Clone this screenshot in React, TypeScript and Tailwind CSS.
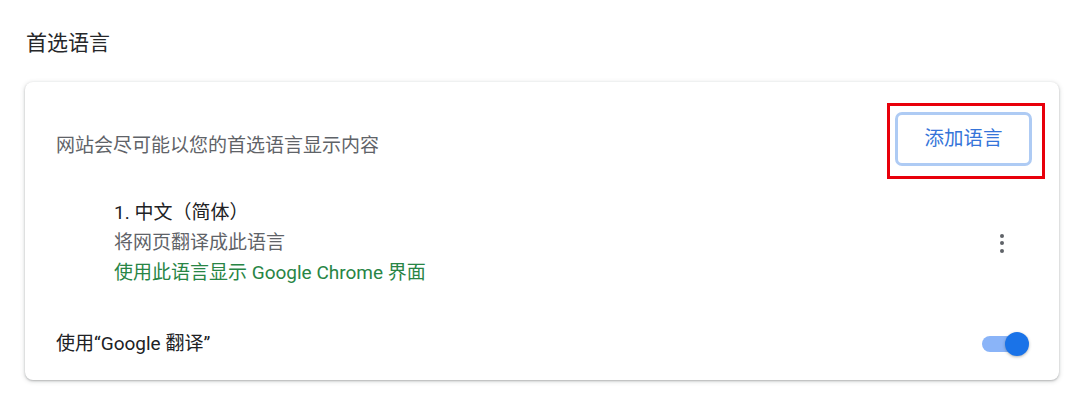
import React from "react";

const font = { fontFamily: "Roboto, 'Noto Sans CJK SC', 'Noto Sans', sans-serif" };

export default function App() {
  return (
    <div className="w-[1080px] h-[402px] bg-white overflow-hidden" style={font}>
      <div className="pt-[29px] pl-[26px] h-[82px]">
        <div className="text-[21px] leading-[28px] text-[#262729]">首选语言</div>
      </div>
      <div className="mx-[25px] w-[1034px] h-[298px] rounded-[8px] bg-white shadow-[0_1px_2px_rgba(60,64,67,0.3),0_1px_4px_1px_rgba(60,64,67,0.15)] flex flex-col">
        <div className="flex items-start justify-between pt-[21px] pl-[31px] pr-[14px]">
          <div className="mt-[30px] text-[19px] leading-[26px] text-[#5f6368]">网站会尽可能以您的首选语言显示内容</div>
          <div className="border-[3px] border-[#e8000b] pl-[5px] pr-[10px] pt-[6px] pb-[10px]">
            <button className="w-[137px] h-[54px] rounded-[7px] border-[3px] border-[#aecbf4] bg-white text-[19.5px] text-[#3574d9] flex items-center justify-center">
              添加语言
            </button>
          </div>
        </div>
        <div className="mt-[19px] flex items-center pl-[89px] pr-[50px]">
          <div className="flex-1 text-[19px] leading-[30px]">
            <div className="text-[#202124]">1. 中文（简体）</div>
            <div className="text-[#5f6368]">将网页翻译成此语言</div>
            <div className="text-[#288545]">使用此语言显示 Google Chrome 界面</div>
          </div>
          <div className="flex flex-col items-center gap-[3.5px] w-[14px]">
            <span className="w-[4px] h-[4px] rounded-full bg-[#5f6368]" />
            <span className="w-[4px] h-[4px] rounded-full bg-[#5f6368]" />
            <span className="w-[4px] h-[4px] rounded-full bg-[#5f6368]" />
          </div>
        </div>
        <div className="mt-[32px] h-[48px] flex items-center justify-between pl-[31px] pr-[30px]">
          <div className="text-[19px] leading-[26px] text-[#202124]">使用“Google 翻译”</div>
          <div className="relative w-[47px] h-[26px] flex items-center">
            <div className="w-[44px] h-[16px] rounded-full bg-[#8ab4f8]" />
            <div className="absolute right-0 top-[1px] w-[24px] h-[24px] rounded-full bg-[#1a73e8] shadow-[0_1px_3px_rgba(60,64,67,0.4)]" />
          </div>
        </div>
      </div>
    </div>
  );
}
